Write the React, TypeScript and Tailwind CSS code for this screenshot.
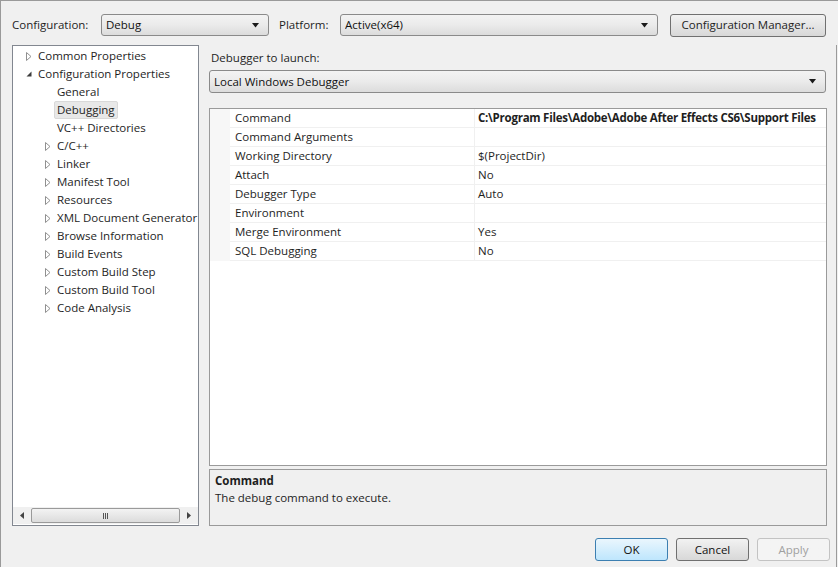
import React from 'react';

// Property Pages - Debugging

const FONT = { fontFamily: '"Open Sans", "Noto Sans", sans-serif' };

type TreeItem = { label: string; level: 0 | 1; arrow?: 'closed' | 'open'; selected?: boolean };

const TREE: TreeItem[] = [
  { label: 'Common Properties', level: 0, arrow: 'closed' },
  { label: 'Configuration Properties', level: 0, arrow: 'open' },
  { label: 'General', level: 1 },
  { label: 'Debugging', level: 1, selected: true },
  { label: 'VC++ Directories', level: 1 },
  { label: 'C/C++', level: 1, arrow: 'closed' },
  { label: 'Linker', level: 1, arrow: 'closed' },
  { label: 'Manifest Tool', level: 1, arrow: 'closed' },
  { label: 'Resources', level: 1, arrow: 'closed' },
  { label: 'XML Document Generator', level: 1, arrow: 'closed' },
  { label: 'Browse Information', level: 1, arrow: 'closed' },
  { label: 'Build Events', level: 1, arrow: 'closed' },
  { label: 'Custom Build Step', level: 1, arrow: 'closed' },
  { label: 'Custom Build Tool', level: 1, arrow: 'closed' },
  { label: 'Code Analysis', level: 1, arrow: 'closed' },
];

const PROPS: [string, string, boolean?][] = [
  ['Command', 'C:\\Program Files\\Adobe\\Adobe After Effects CS6\\Support Files', true],
  ['Command Arguments', ''],
  ['Working Directory', '$(ProjectDir)'],
  ['Attach', 'No'],
  ['Debugger Type', 'Auto'],
  ['Environment', ''],
  ['Merge Environment', 'Yes'],
  ['SQL Debugging', 'No'],
];

function DropArrow() {
  return (
    <svg width="8" height="5" viewBox="0 0 8 5" className="shrink-0">
      <path d="M0 0 H7 L3.5 4.5 Z" fill="#1a1a1a" />
    </svg>
  );
}

function Combo({ value, className }: { value: string; className: string }) {
  return (
    <div
      className={`flex items-center h-[22px] pl-[4px] pr-[8px] rounded-[3px] border border-[#8a8a8a] bg-gradient-to-b from-[#f3f3f3] via-[#ebebeb] to-[#dcdcdc] text-[11.5px] text-[#111] ${className}`}
    >
      <span className="flex-1 truncate">{value}</span>
      <DropArrow />
    </div>
  );
}

function TreeArrow({ kind }: { kind: 'closed' | 'open' }) {
  if (kind === 'open') {
    return (
      <svg width="6" height="6" viewBox="0 0 6 6">
        <path d="M5.5 0.5 V5.5 H0.5 Z" fill="#3c3c3c" />
      </svg>
    );
  }
  return (
    <svg width="6" height="9" viewBox="0 0 6 9">
      <path d="M0.5 0.5 L5 4.5 L0.5 8.5 Z" fill="none" stroke="#909090" strokeWidth="1" />
    </svg>
  );
}

function Button({ label, kind }: { label: string; kind?: 'default' | 'disabled' }) {
  const cls =
    kind === 'default'
      ? 'border-[#3c7fb1] from-[#eaf6fd] to-[#bee6fd] text-[#111]'
      : kind === 'disabled'
        ? 'border-[#c3c3c3] from-[#f4f4f4] to-[#f4f4f4] text-[#a0a0a0]'
        : 'border-[#707070] from-[#f2f2f2] to-[#d8d8d8] text-[#111]';
  return (
    <div
      className={`w-[73px] h-[23px] flex items-center justify-center rounded-[3px] border bg-gradient-to-b text-[11.5px] ${cls}`}
    >
      {label}
    </div>
  );
}

export default function App() {
  return (
    <div
      className="w-[838px] h-[567px] bg-[#f0f0f0] border-l border-t border-[#9a9a9a] flex flex-col overflow-hidden text-[#1e1e1e] text-[11.5px]"
      style={FONT}
    >
      {/* top bar */}
      <div className="flex items-center h-[44px] pt-[4px] pl-[11px]">
        <span className="w-[89px]">Configuration:</span>
        <Combo value="Debug" className="w-[168px]" />
        <span className="ml-[10px] w-[61px]">Platform:</span>
        <Combo value="Active(x64)" className="w-[318px]" />
        <div className="ml-[12px] w-[156px] h-[23px] flex items-center justify-center rounded-[3px] border border-[#707070] bg-gradient-to-b from-[#f2f2f2] to-[#d8d8d8]">
          Configuration Manager...
        </div>
      </div>

      <div className="flex flex-1 min-h-0 border-r border-[#9a9a9a] mr-[1px]">
        {/* tree */}
        <div className="ml-[11px] w-[187px] h-[481px] border border-[#828790] bg-white flex flex-col">
          <div className="flex-1 pt-[1px]">
            {TREE.map((t) => (
              <div key={t.label} className="h-[18px] flex items-center whitespace-nowrap">
                <div
                  className={`${t.level === 0 ? 'w-[25px]' : 'w-[44px]'} shrink-0 flex justify-end pr-[6px] items-center`}
                >
                  {t.arrow && <TreeArrow kind={t.arrow} />}
                </div>
                <span
                  className={`px-[2px] -ml-[3px] leading-[16px] ${t.selected ? 'bg-[#e8e8e8] border border-[#d9d9d9] rounded-[2px]' : 'border border-transparent'}`}
                >
                  {t.label}
                </span>
              </div>
            ))}
          </div>
          <div className="h-[17px] mb-[1px] flex items-center bg-[#f0f0f0]">
            <div className="w-[18px] flex justify-center">
              <svg width="4" height="7" viewBox="0 0 4 7">
                <path d="M4 0 V7 L0 3.5 Z" fill="#444" />
              </svg>
            </div>
            <div className="flex-1 h-[15px] rounded-[2px] border border-[#9a9a9a] bg-gradient-to-b from-[#f3f3f3] to-[#dcdcdc] flex items-center justify-center">
              <div className="flex gap-[1px]">
                <div className="w-[1px] h-[6px] bg-[#555]" />
                <div className="w-[1px] h-[6px] bg-[#555]" />
                <div className="w-[1px] h-[6px] bg-[#555]" />
              </div>
            </div>
            <div className="w-[18px] flex justify-center">
              <svg width="4" height="7" viewBox="0 0 4 7">
                <path d="M0 0 V7 L4 3.5 Z" fill="#444" />
              </svg>
            </div>
          </div>
        </div>

        {/* right side */}
        <div className="ml-[10px] w-[618px] flex flex-col">
          <div className="h-[24px] pl-[2px] pt-[1px] flex items-center">Debugger to launch:</div>
          <Combo value="Local Windows Debugger" className="w-[617px] mt-[1px] h-[23px] pl-[3px]" />

          <div className="mt-[15px] h-[358px] border border-[#9a9a9a] bg-white overflow-hidden">
            {PROPS.map(([name, value, bold]) => (
              <div key={name} className="flex h-[19px]">
                <div className="w-[20px] shrink-0 bg-[#f7f7f7]" />
                <div className="w-[245px] shrink-0 pl-[5px] flex items-center border-b border-r border-[#f0f0f0] whitespace-nowrap">
                  {name}
                </div>
                <div
                  className={`flex-1 pl-[3px] flex items-center border-b border-[#f0f0f0] whitespace-nowrap overflow-hidden ${bold ? 'font-bold tracking-[-0.25px]' : ''}`}
                >
                  {value}
                </div>
              </div>
            ))}
          </div>

          <div className="mt-[3px] h-[57px] border border-[#9a9a9a] bg-[#f0f0f0] px-[5px] pt-[2px] leading-[17px]">
            <div className="font-bold">Command</div>
            <div>The debug command to execute.</div>
          </div>

          <div className="flex justify-end gap-[8px] mt-[12px] -mr-[3px]">
            <Button label="OK" kind="default" />
            <Button label="Cancel" />
            <Button label="Apply" kind="disabled" />
          </div>
        </div>
      </div>
    </div>
  );
}
